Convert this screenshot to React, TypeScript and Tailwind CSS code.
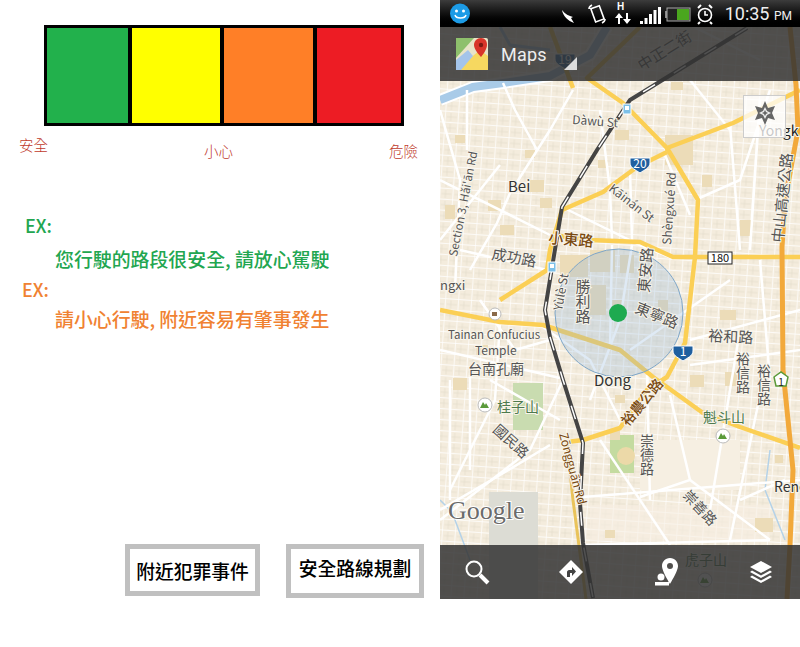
const CJK = "font-['Noto_Sans_CJK_TC','Noto_Sans',sans-serif]"

const majorRoads = [
  "110,27 133,88",
  "200,27 147,78 183,103 227,148 293,123 360,90",
  "227,148 258,200 255,257 245,343 227,377 207,390 180,428 143,440 127,442",
  "227,152 197,167 163,192 122,210 110,250 107,270 60,300",
  "113,235 150,240 200,242 233,257 360,257",
  "0,310 60,322 103,325 180,350 213,377 227,387 263,413 300,427 360,448",
]

const streets = [
  "133,90 110,130 70,193 57,223 30,270", "63,83 75,110 97,150", "27,90 27,150", "60,165 0,240", "0,180 110,235",
  "0,110 20,180 15,290", "20,250 107,270", "160,110 170,190 172,240", "190,170 192,240",
  "225,155 250,215", "255,200 300,180 330,90", "290,125 300,250", "320,100 310,250", "172,245 170,350",
  "192,245 180,320 150,400", "100,325 150,360 180,420", "40,300 75,350 110,340", "0,350 120,378",
  "60,322 55,400 10,490", "10,380 10,500", "30,375 30,470", "120,420 50,380", "123,380 90,450 0,520",
  "110,445 60,475 0,510", "143,497 360,480", "207,375 210,500", "230,395 250,480 200,497", "250,340 360,310",
  "300,330 270,510", "320,395 290,540", "250,480 330,540", "300,500 345,480", "190,350 290,280",
  "160,440 230,545", "250,365 360,350", "320,260 330,380", "140,545 330,540", "240,20 320,60", "250,80 290,130",
  "122,207 200,245 232,258",
]

const tanBlocks = [
  [5, 205, 10, 14], [48, 200, 13, 11], [90, 180, 14, 12], [120, 255, 28, 22], [150, 250, 25, 22], [180, 255, 14, 18],
  [148, 285, 18, 30], [170, 300, 14, 14], [225, 135, 28, 30], [231, 82, 12, 8], [175, 130, 14, 10], [300, 220, 12, 16],
  [280, 310, 16, 10], [158, 160, 10, 8], [218, 300, 10, 12], [13, 378, 14, 12], [250, 375, 14, 12], [285, 372, 18, 14],
  [335, 455, 8, 8], [315, 518, 18, 14], [170, 430, 10, 10], [165, 530, 10, 8], [60, 225, 14, 10], [36, 345, 12, 10],
  [85, 150, 10, 8], [262, 175, 10, 12], [175, 395, 10, 8], [15, 135, 10, 8], [100, 198, 12, 10],
]

const Label = ({
  x,
  y,
  text,
  size = 13,
  rotate = 0,
  fill = "#555",
  weight = 400,
  vertical = false,
}: {
  x: number
  y: number
  text: string
  size?: number
  rotate?: number
  fill?: string
  weight?: number
  vertical?: boolean
}) => (
  <text
    x={x}
    y={y}
    fontSize={size}
    fill={fill}
    fontWeight={weight}
    stroke="#f8f4ea"
    strokeWidth={2}
    paintOrder="stroke"
    writingMode={vertical ? "vertical-rl" : undefined}
    transform={rotate ? `rotate(${rotate} ${x} ${y})` : undefined}
  >
    {text}
  </text>
)

const Shield = ({ x, y, text }: { x: number; y: number; text: string }) => (
  <g>
    <path
      d={`M${x - 10} ${y - 6}h20v5c0 5-6 7-10 10c-4-3-10-5-10-10z`}
      fill="#1f5f9f"
      stroke="#fff"
      strokeWidth={1}
    />
    <text x={x} y={y + 4} fontSize={12} fill="#fff" textAnchor="middle">
      {text}
    </text>
  </g>
)

const Peak = ({ x, y }: { x: number; y: number }) => (
  <g>
    <circle cx={x} cy={y} r={7} fill="#fff" stroke="#bbb" />
    <path d={`M${x - 5} ${y + 3}l3-6 2 3 1-2 3 5z`} fill="#5a9a3a" />
  </g>
)

const Transit = ({ x, y }: { x: number; y: number }) => (
  <g>
    <rect x={x - 4} y={y - 5} width={8} height={10} fill="#7cc0e8" stroke="#fff" />
    <rect x={x - 2} y={y - 3} width={4} height={4} fill="#fff" />
  </g>
)

const MapCanvas = () => (
  <svg viewBox="0 0 360 599" className={`absolute inset-0 h-[599px] w-[360px] ${CJK}`}>
    <defs>
      <pattern id="blocks" width={13} height={11} patternUnits="userSpaceOnUse" patternTransform="rotate(4)">
        <path d="M0 0h13M0 0v11" stroke="#fff" strokeWidth={1.3} fill="none" />
        <path d="M6 2v8M2 6h10" stroke="#e4dccb" strokeWidth={0.7} fill="none" />
      </pattern>
    </defs>
    <rect width={360} height={599} fill="#f4ecdd" />
    <rect width={360} height={599} fill="url(#blocks)" />
    <rect x={49} y={492} width={49} height={107} fill="#dcdcd4" />
    <rect x={170} y={435} width={24} height={38} fill="#c4dba0" />
    <circle cx={186} cy={456} r={9} fill="#ecd9a8" />
    <rect x={73} y={383} width={30} height={47} fill="#c9dcb0" />
    <rect x={200} y={440} width={100} height={50} fill="#f6efe2" />
    <rect x={150} y={505} width={180} height={36} fill="#f6efe2" fillOpacity={0.6} />
    {tanBlocks.map(([x, y, w, h]) => (
      <rect key={`${x}-${y}`} x={x} y={y} width={w} height={h} fill="#ecdcb8" />
    ))}

    <polyline points="0,100 33,87 63,83 110,76 150,55 167,27" fill="none" stroke="#fff" strokeWidth={12} />
    <polyline points="0,100 33,87 63,83 110,76 150,55 167,27" fill="none" stroke="#a9cbe8" strokeWidth={8} />
    <polyline points="60,27 70,45 110,50" fill="none" stroke="#a9cbe8" strokeWidth={3} />
    <polyline points="330,450 325,490 345,540" fill="none" stroke="#b4d2e8" strokeWidth={1.5} />
    <polyline points="0,500 12,512 30,560" fill="none" stroke="#b4d2e8" strokeWidth={1.5} />

    {streets.map((points) => (
      <polyline key={points} points={points} fill="none" stroke="#fff" strokeWidth={2.5} />
    ))}

    {majorRoads.map((points) => (
      <polyline key={points} points={points} fill="none" stroke="#fbcf55" strokeWidth={4.5} strokeLinejoin="round" />
    ))}
    <polyline points="127,442 133,500 146,599" fill="none" stroke="#e9c35a" strokeWidth={3} />
    <polyline
      points="350,27 356,85 358,130 345,200 342,247 343,370 353,470 350,545 347,599"
      fill="none"
      stroke="#f2a93b"
      strokeWidth={5}
    />

    <polyline
      points="307,28 190,100 157,150 122,207 105,310 110,337 123,380 143,443 140,503 143,543 153,598"
      fill="none"
      stroke="#444"
      strokeWidth={4}
    />
    <polyline
      points="307,28 190,100 157,150 122,207 105,310 110,337 123,380 143,443 140,503 143,543 153,598"
      fill="none"
      stroke="#fff"
      strokeWidth={1.5}
      strokeDasharray="14 22"
    />

    <circle cx={179} cy={313} r={64} fill="#8db4dc" fillOpacity={0.28} stroke="#7ea6c8" strokeWidth={1} />
    <circle cx={178} cy={313} r={9} fill="#1eaa50" />

    <Label x={132} y={124} text="Dàwù St" size={12} rotate={4} />
    <Label x={68} y={192} text="Bei" size={15} fill="#333" />
    <Label x={17} y={257} text="Section 3, Hǎi'ān Rd" size={11.5} rotate={-79} />
    <Label x={168} y={190} text="Kāinán St" size={12} rotate={38} />
    <Label x={231} y={245} text="Shèngxué Rd" size={12} rotate={-86} />
    <Label x={108} y={243} text="小東路" size={15} rotate={5} fill="#7a4a10" weight={500} />
    <Label x={51} y={259} text="成功路" size={15} rotate={10} />
    <Label x={0} y={290} text="ngxi" size={13} />
    <Label x={122} y={311} text="Yùlè St" size={12} rotate={-80} />
    <Label x={143} y={279} text="勝利路" size={15} vertical />
    <Label x={209} y={293} text="東安路" size={15} rotate={-85} />
    <Label x={194} y={312} text="東寧路" size={15} rotate={22} />
    <Label x={268} y={341} text="裕和路" size={15} rotate={3} />
    <Label x={303} y={352} text="裕信路" size={14} vertical />
    <Label x={324} y={364} text="裕信路" size={14} vertical />
    <Label x={8} y={339} text="Tainan Confucius" size={11.5} />
    <Label x={35} y={355} text="Temple" size={12} />
    <Label x={28} y={374} text="台南孔廟" size={14} />
    <Label x={154} y={386} text="Dong" size={15} fill="#333" />
    <Label x={188} y={427} text="裕農公路" size={14} rotate={-50} fill="#7a4a10" weight={500} />
    <Label x={57} y={412} text="桂子山" size={14} fill="#4d7a4d" />
    <Label x={263} y={422} text="魁斗山" size={14} fill="#4d7a4d" />
    <Label x={52} y={431} text="國民路" size={14} rotate={42} />
    <Label x={207} y={434} text="崇德路" size={14} vertical />
    <Label x={242} y={496} text="崇善路" size={14} rotate={47} />
    <Label x={119} y={434} text="Zōngguān Rd" size={12} rotate={75} fill="#7a4a10" />
    <Label x={334} y={492} text="Rene" size={14} fill="#333" />
    <Label x={343} y={243} text="中山高速公路" size={15} rotate={-84} />
    <Label x={245} y={565} text="虎子山" size={14} fill="#4d7a4d" />
    <Label x={202} y={71} text="中正二街" size={15} rotate={-32} />
    <Label x={319} y={136} text="Yongk" size={14} fill="#222" />

    <text x={8} y={519} fontSize={26} fill="#6b6b6b" stroke="#fff" strokeWidth={2} paintOrder="stroke" className="font-['Liberation_Serif',serif]">
      Google
    </text>

    <rect x={268} y={252} width={24} height={12} fill="#fff" stroke="#222" />
    <text x={280} y={262} fontSize={11} fill="#111" textAnchor="middle">
      180
    </text>
    <Shield x={125} y={60} text="19" />
    <Shield x={200} y={164} text="20" />
    <Shield x={243} y={352} text="1" />
    <path d="M334 377l7-5 7 5-2 9h-10z" fill="#fff" stroke="#5a9a3a" strokeWidth={1.5} />
    <text x={341} y={386} fontSize={10} fill="#222" textAnchor="middle">
      1
    </text>
    <Peak x={45} y={405} />
    <Peak x={283} y={436} />
    <Peak x={265} y={580} />
    <Transit x={187} y={109} />
    <Transit x={112} y={267} />
    <circle cx={55} cy={314} r={6} fill="#fff" stroke="#bbb" />
    <rect x={52} y={312} width={5} height={4} fill="#8a6a4a" />
  </svg>
)

const StatusIcons = () => (
  <svg width={155} height={27} viewBox="0 0 155 27" className="shrink-0">
    <path d="M3 10c1 6 6 11 12 13l-3-5 2-1c-4-1-8-3-11-7z" fill="#fff" />
    <g fill="none" stroke="#fff" strokeWidth={1.6}>
      <rect x={34} y={7} width={9} height={14} transform="rotate(-20 38 14)" />
      <path d="M30 9c0-2 1-3 3-4M46 19c0 2-1 3-3 4" />
    </g>
    <text x={58} y={10} fontSize={10} fontWeight={700} fill="#fff" className="font-['Liberation_Sans',sans-serif]">
      H
    </text>
    <path d="M59 24v-6h-3l4-5 4 5h-3v6zM67 13v6h-3l4 5 4-5h-3v-6z" fill="#fff" />
    <g fill="#fff">
      <rect x={81} y={21} width={3} height={3} />
      <rect x={85.5} y={18} width={3} height={6} />
      <rect x={90} y={14} width={3} height={10} />
      <rect x={94.5} y={10} width={3} height={14} />
      <rect x={99} y={7} width={3} height={17} />
    </g>
    <rect x={106} y={11} width={2} height={7} fill="#888" />
    <rect x={108} y={8} width={23} height={13} fill="#222" stroke="#aaa" />
    <rect x={118} y={9} width={12} height={11} fill="#4aa61e" />
    <g fill="none" stroke="#fff" strokeWidth={1.6}>
      <circle cx={146} cy={15} r={6.5} />
      <path d="M146 11v4h3" />
    </g>
    <path d="M139 8l3-3M153 8l-3-3M141 22l-2 2M151 22l2 2" stroke="#fff" strokeWidth={2} />
  </svg>
)

const PhoneMap = () => (
  <div className="relative h-[599px] w-[360px] shrink-0 overflow-hidden">
    <MapCanvas />
    <div className="relative flex h-full flex-col">
      <div className="flex h-[27px] items-center bg-gradient-to-b from-[#3c3c3c] to-[#000] pl-[10px] pr-2">
        <svg width={21} height={21} viewBox="0 0 21 21" className="shrink-0">
          <circle cx={10} cy={10.5} r={10} fill="#1c9be6" />
          <circle cx={6.5} cy={8} r={1.5} fill="#fff" />
          <circle cx={13.5} cy={8} r={1.5} fill="#fff" />
          <path d="M5 12c1 4 10 4 11 0" fill="none" stroke="#fff" strokeWidth={1.5} />
        </svg>
        <div className="ml-[88px]">
          <StatusIcons />
        </div>
        <p className="ml-auto whitespace-nowrap font-['Roboto',sans-serif] text-[18px] leading-none text-[#eee]">
          10:35 <span className="text-[12px]">PM</span>
        </p>
      </div>

      <div className="relative flex h-[54px] items-center bg-[#333]/85 pl-4">
        <svg width={32} height={32} viewBox="0 0 32 32" className="shrink-0">
          <rect width={32} height={32} rx={2} fill="#e8e4c8" />
          <path d="M0 0h18L0 20z" fill="#8ec06c" />
          <path d="M0 32l24-20 8 6v14z" fill="#f6d860" />
          <path d="M0 22L12 12l5 6L5 32H0z" fill="#a4c4ea" />
          <path d="M25 0c-4 0-7 3-7 7 0 5 7 12 7 12s6-7 6-12c0-4-2-7-6-7z" fill="#d8352a" />
          <circle cx={25} cy={7} r={2.2} fill="#7c1a12" />
        </svg>
        <span className="ml-[13px] font-['Roboto',sans-serif] text-[18px] tracking-[0.2px] text-[#eee]">Maps</span>
        <svg width={14} height={14} viewBox="0 0 14 14" className="absolute left-[124px] top-[30px]">
          <path d="M13 0v13H0z" fill="#dcdcdc" />
        </svg>
      </div>

      <div className="mr-[14px] mt-[14px] flex h-[43px] w-[43px] items-start justify-center self-end border border-[#ccc] bg-white/75 pt-1">
        <svg width={26} height={26} viewBox="0 0 26 26">
          <path d="M13 1l3 7 7-2-3 7 3 7-7-2-3 7-3-7-7 2 3-7-3-7 7 2z" fill="#666" />
          <path d="M13 7l2 4 4 2-4 2-2 4-2-4-4-2 4-2z" fill="#eee" />
          <path d="M13 10l1 2 2 1-2 1-1 2-1-2-2-1 2-1z" fill="#666" />
        </svg>
      </div>

      <div className="mt-auto flex h-[54px] items-center bg-[#333]/85 pl-[24px] pr-[24px]">
        <svg width={26} height={26} viewBox="0 0 26 26" className="shrink-0">
          <circle cx={10} cy={10} r={7.5} fill="none" stroke="#fff" strokeWidth={2} />
          <path d="M16 16l8 8" stroke="#fff" strokeWidth={4} />
        </svg>
        <svg width={26} height={26} viewBox="0 0 26 26" className="ml-[68px] shrink-0">
          <path d="M13 1l12 12-12 12L1 13z" fill="#fff" />
          <path d="M9 18v-5c0-1 1-2 2-2h3V8l4 4.5-4 4.5v-3h-2v4z" fill="#444" />
        </svg>
        <svg width={26} height={30} viewBox="0 0 26 30" className="ml-[70px] shrink-0">
          <path fillRule="evenodd" d="M16 1c-5 0-8 4-8 8 0 5 8 18 8 18s8-13 8-18c0-4-3-8-8-8zm0 5a3 3 0 1 1 0 6 3 3 0 0 1 0-6z" fill="#fff" />
          <circle cx={7} cy={20} r={3.5} fill="#fff" />
          <rect x={1} y={25} width={14} height={3.5} fill="#fff" />
        </svg>
        <svg width={24} height={24} viewBox="0 0 24 24" className="ml-[69px] shrink-0">
          <path d="M12 1l11 6-11 6L1 7z" fill="#fff" />
          <path d="M3 10.5l9 5 9-5 2 1.5-11 6L1 12z" fill="#fff" />
          <path d="M3 15.5l9 5 9-5 2 1.5-11 6L1 17z" fill="#fff" />
        </svg>
      </div>
    </div>
  </div>
)

const SCALE = [
  { color: "bg-[#22b14c]", width: "w-[81px]" },
  { color: "bg-[#ffff00]", width: "w-[88px]" },
  { color: "bg-[#ff7f27]", width: "w-[90px]" },
  { color: "bg-[#ed1c24]", width: "w-[84px]" },
]

const LeftPanel = () => (
  <div className={`flex h-[599px] w-[440px] shrink-0 flex-col ${CJK}`}>
    <div className="ml-[44px] mt-[25px] flex h-[101px] w-[360px] gap-[4px] border-[3px] border-black bg-black">
      {SCALE.map((cell) => (
        <div key={cell.color} className={`h-full ${cell.color} ${cell.width}`} />
      ))}
    </div>

    <div className="flex h-[34px] text-[14.5px] font-light leading-none text-[#c0392b]">
      <span className="ml-[19px] mt-[12px]">安全</span>
      <span className="ml-[156px] mt-[18px]">小心</span>
      <span className="ml-[156px] mt-[18px]">危險</span>
    </div>

    <div className="mt-[52px] flex flex-col font-medium">
      <p className="ml-[25px] h-[33px] text-[18px] leading-[26px] text-[#22a650]">EX:</p>
      <p className="ml-[55px] h-[31px] text-[18.9px] leading-[28px] text-[#22a650]">您行駛的路段很安全, 請放心駕駛</p>
      <p className="ml-[22px] h-[29px] text-[18px] leading-[26px] text-[#f08232]">EX:</p>
      <p className="ml-[55px] text-[18.9px] leading-[28px] text-[#f08232]">請小心行駛, 附近容易有肇事發生</p>
    </div>

    <div className="mt-auto flex h-[55px] items-start text-[18.8px] font-medium text-black">
      <button className="ml-[125px] flex h-[52px] w-[135px] items-center justify-center border-[5px] border-[#c0c0c0] pt-[2px]">
        附近犯罪事件
      </button>
      <button className="ml-[26px] flex h-[54px] w-[138px] items-center justify-center border-[5px] border-[#c0c0c0] pb-[6px]">
        安全路線規劃
      </button>
    </div>
  </div>
)

export default function App() {
  return (
    <div className="flex h-[647px] w-[800px] items-start overflow-hidden bg-white">
      <LeftPanel />
      <PhoneMap />
    </div>
  )
}
